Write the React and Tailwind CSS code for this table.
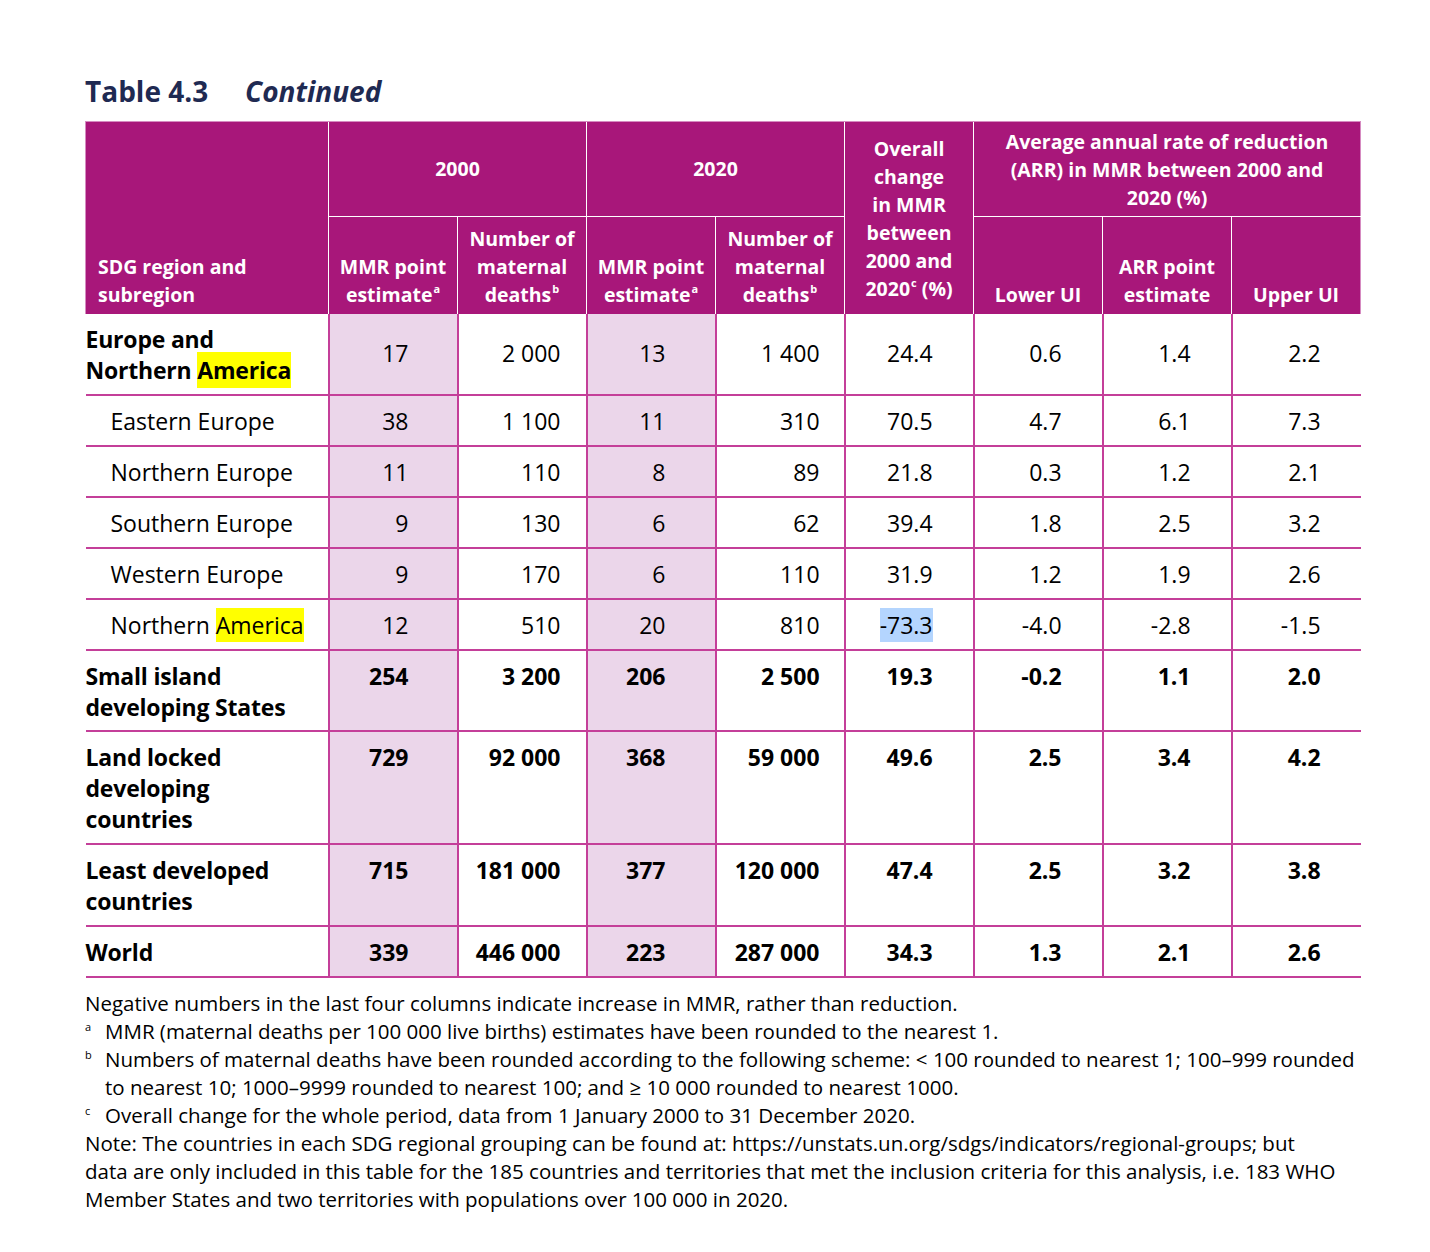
import React from "react";

const rows = [
  { hl: true, bold: true, numBold: false, h: "h-[81px]", mid: true, vals: ["17", "2 000", "13", "1 400", "24.4", "0.6", "1.4", "2.2"] },
  { name: ["Eastern Europe"], vals: ["38", "1 100", "11", "310", "70.5", "4.7", "6.1", "7.3"] },
  { name: ["Northern Europe"], vals: ["11", "110", "8", "89", "21.8", "0.3", "1.2", "2.1"] },
  { name: ["Southern Europe"], vals: ["9", "130", "6", "62", "39.4", "1.8", "2.5", "3.2"] },
  { name: ["Western Europe"], vals: ["9", "170", "6", "110", "31.9", "1.2", "1.9", "2.6"] },
  { hl2: true, vals: ["12", "510", "20", "810", "-73.3", "-4.0", "-2.8", "-1.5"] },
  { name: ["Small island", "developing States"], bold: true, numBold: true, h: "h-[81px]", vals: ["254", "3 200", "206", "2 500", "19.3", "-0.2", "1.1", "2.0"] },
  { name: ["Land locked", "developing", "countries"], bold: true, numBold: true, h: "h-[113px]", vals: ["729", "92 000", "368", "59 000", "49.6", "2.5", "3.4", "4.2"] },
  { name: ["Least developed", "countries"], bold: true, numBold: true, h: "h-[82px]", vals: ["715", "181 000", "377", "120 000", "47.4", "2.5", "3.2", "3.8"] },
  { name: ["World"], bold: true, numBold: true, h: "h-[51px]", vals: ["339", "446 000", "223", "287 000", "34.3", "1.3", "2.1", "2.6"] },
];

const padR = ["pr-[48px]", "pr-[25px]", "pr-[49px]", "pr-[24px]", "pr-[40px]", "pr-[40px]", "pr-[40px]", "pr-[40px]"];
const shaded = [true, false, true, false, false, false, false, false];

function Name({ r }) {
  if (r.hl) {
    return (
      <>
        Europe and
        <br />
        Northern <span className="bg-[#ffff00] py-[2px]">America</span>
      </>
    );
  }
  if (r.hl2) {
    return (
      <>
        Northern <span className="bg-[#ffff00] py-[1px]">America</span>
      </>
    );
  }
  return r.name.map((n, i) => (
    <React.Fragment key={i}>
      {i > 0 && <br />}
      {n}
    </React.Fragment>
  ));
}

function Sup({ children }) {
  return <sup className="text-[11px] font-bold relative -top-[9px] ml-[1px]">{children}</sup>;
}

function FootMark({ children }) {
  return <span className="w-[20px] shrink-0 text-[11px] leading-[20px]">{children}</span>;
}

export default function App() {
  return (
    <div className="w-[1430px] h-[1252px] bg-white [font-family:'Open_Sans',sans-serif] text-black pl-[85px] pt-[74px]">
      <h1 className="text-[28px] leading-[34px] font-bold text-[#1f2a52] flex">
        <span className="w-[160px]">Table 4.3</span>
        <span className="italic">Continued</span>
      </h1>
      <table className="mt-[13px] table-fixed border-collapse w-[1276px]">
        <colgroup>
          <col className="w-[243px]" />
          {[0, 1, 2, 3, 4, 5, 6, 7].map((i) => (
            <col key={i} className="w-[129px]" />
          ))}
        </colgroup>
        <thead className="bg-[#a8177a] text-white font-bold text-[19.5px] leading-[28px]">
          <tr className="h-[95px]">
            <th rowSpan={2} className="text-left align-bottom pl-[12px] pb-[5px] font-bold border-t border-l border-[#d68bc1]">
              SDG region and
              <br />
              subregion
            </th>
            <th colSpan={2} className="text-center align-middle font-bold border-t border-[#d68bc1] border-l border-l-white border-b border-b-white">
              2000
            </th>
            <th colSpan={2} className="text-center align-middle font-bold border-t border-[#d68bc1] border-l border-l-white border-b border-b-white">
              2020
            </th>
            <th rowSpan={2} className="text-center align-middle font-bold border-t border-[#d68bc1] border-l border-l-white pt-[2px]">
              Overall
              <br />
              change
              <br />
              in MMR
              <br />
              between
              <br />
              2000 and
              <br />
              2020<Sup>c</Sup> (%)
            </th>
            <th colSpan={3} className="text-center align-middle font-bold border-t border-r border-[#d68bc1] border-l border-l-white border-b border-b-white pt-[2px]">
              Average annual rate of reduction
              <br />
              (ARR) in MMR between 2000 and
              <br />
              2020 (%)
            </th>
          </tr>
          <tr className="h-[97px]">
            <th className="text-center align-bottom pb-[5px] font-bold border-l border-white">
              MMR point
              <br />
              estimate<Sup>a</Sup>
            </th>
            <th className="text-center align-bottom pb-[5px] font-bold border-l border-white">
              Number of
              <br />
              maternal
              <br />
              deaths<Sup>b</Sup>
            </th>
            <th className="text-center align-bottom pb-[5px] font-bold border-l border-white">
              MMR point
              <br />
              estimate<Sup>a</Sup>
            </th>
            <th className="text-center align-bottom pb-[5px] font-bold border-l border-white">
              Number of
              <br />
              maternal
              <br />
              deaths<Sup>b</Sup>
            </th>
            <th className="text-center align-bottom pb-[5px] font-bold border-l border-white">Lower UI</th>
            <th className="text-center align-bottom pb-[5px] font-bold border-l border-white">
              ARR point
              <br />
              estimate
            </th>
            <th className="text-center align-bottom pb-[5px] font-bold border-l border-r border-l-white border-r-[#d68bc1]">Upper UI</th>
          </tr>
        </thead>
        <tbody className="text-[23px] leading-[31px]">
          {rows.map((r, ri) => (
            <tr key={ri} className={`${r.h || "h-[51px]"} border-b-2 border-[#c43f99]`}>
              <td className={`align-top pt-[10px] ${r.bold ? "font-bold tracking-[-0.2px]" : "pl-[25px]"}`}>
                <Name r={r} />
              </td>
              {r.vals.map((v, vi) => (
                <td
                  key={vi}
                  className={`text-right border-l-2 border-[#c43f99] ${r.mid ? "align-middle" : "align-top pt-[10px]"} ${padR[vi]} ${shaded[vi] ? "bg-[#ebd6ea]" : ""} ${r.numBold ? "font-bold" : ""}`}
                >
                  {r.hl2 && vi === 4 ? <span className="bg-[#b4d5fe] py-[1px]">{v}</span> : v}
                </td>
              ))}
            </tr>
          ))}
        </tbody>
      </table>
      <div className="mt-[11px] text-[20.5px] leading-[28px] w-[1320px]">
        <p>Negative numbers in the last four columns indicate increase in MMR, rather than reduction.</p>
        <div className="flex">
          <FootMark>a</FootMark>
          <p>MMR (maternal deaths per 100 000 live births) estimates have been rounded to the nearest 1.</p>
        </div>
        <div className="flex">
          <FootMark>b</FootMark>
          <p className="whitespace-nowrap">
            Numbers of maternal deaths have been rounded according to the following scheme: &lt; 100 rounded to nearest 1; 100–999 rounded
            <br />
            to nearest 10; 1000–9999 rounded to nearest 100; and ≥ 10 000 rounded to nearest 1000.
          </p>
        </div>
        <div className="flex">
          <FootMark>c</FootMark>
          <p>Overall change for the whole period, data from 1 January 2000 to 31 December 2020.</p>
        </div>
        <p className="whitespace-nowrap">
          Note: The countries in each SDG regional grouping can be found at: https://unstats.un.org/sdgs/indicators/regional-groups; but
          <br />
          data are only included in this table for the 185 countries and territories that met the inclusion criteria for this analysis, i.e. 183 WHO
          <br />
          Member States and two territories with populations over 100 000 in 2020.
        </p>
      </div>
    </div>
  );
}
